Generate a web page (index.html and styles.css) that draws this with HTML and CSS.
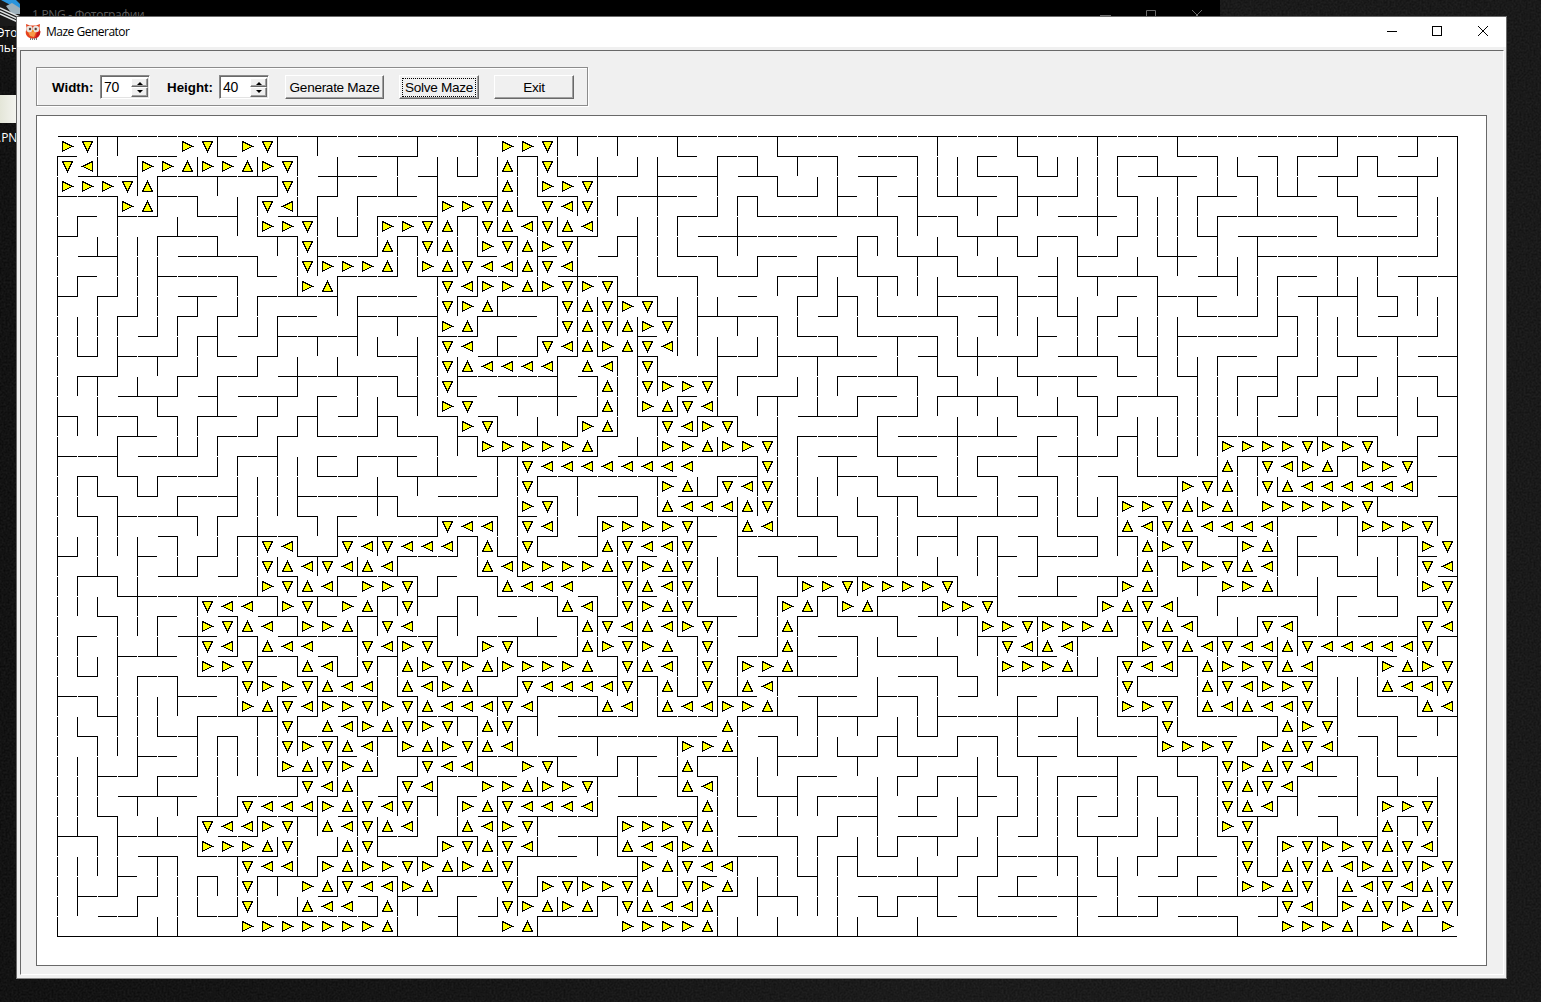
FILE: index.html
```html
<!DOCTYPE html>
<html lang="en">
<head>
<meta charset="utf-8">
<title>Maze Generator</title>
<link rel="stylesheet" href="styles.css">
</head>
<body>
<div class="desktop">
  <svg class="wallpaper" width="1541" height="1002">
    <filter id="leather" x="0" y="0" width="100%" height="100%" color-interpolation-filters="sRGB">
      <feTurbulence type="fractalNoise" baseFrequency="0.5" numOctaves="2" seed="4"/>
      <feColorMatrix values="0.16 0 0 0 0  0.16 0 0 0 0  0.16 0 0 0 0  0 0 0 0 0.6"/>
    </filter>
    <rect width="1541" height="1002" filter="url(#leather)"/>
  </svg>
  <div class="photos"><span class="photos-title">1.PNG - Фотографии</span>
    <svg class="photos-controls" width="110" height="16" viewBox="0 0 110 16"><path d="M0 15.5h11M46.500 16v-5.500h9V16M92 10l10 10M102 10L92 20"/></svg>
  </div>
  <div class="shortcut-art"><svg width="20" height="26" viewBox="0 0 20 26"><path fill="#2a94dc" d="M1 0h15l4 4v6z"/><path fill="#9db0bb" d="M6 6l6-3 8 5v6h-8z"/><path stroke="#dfe3e4" stroke-width="1.500" fill="none" d="M0 8l20 9M0 11l20 9M0 14l18 8"/></svg></div>
  <div class="shortcut-label">Это<br>льн</div>
  <div class="shortcut-thumb"></div>
  <div class="shortcut-label shortcut-file">.PNG</div>

  <div class="window">
    <div class="titlebar">
      <svg class="owl" width="16" height="16" viewBox="0 0 16 16">
        <path fill="#e5431f" d="M1 0l4 1.500h6L15 0l-.5 4 .8 4c0 4-3 6.500-7.300 6.500S.7 12 .7 8l.8-4z"/>
        <path fill="#f79a4a" d="M3 8h8l-2 5-4-1z"/>
        <path fill="#c5141c" d="M15.300 7c0 5-3 7.500-7 7.500 3-1 3-3 3.500-6z"/>
        <circle cx="4.500" cy="5" r="3.200" fill="#e9e4df"/><circle cx="11" cy="5" r="3.200" fill="#e9e4df"/>
        <circle cx="5" cy="5" r="1.200" fill="#54443c"/><circle cx="10.700" cy="5" r="1.200" fill="#54443c"/>
        <path fill="#f5a21d" d="M6.800 6h2l-1 3z"/>
        <path stroke="#777" d="M5.500 14v2M7.500 14v2M9.500 14v2M11.500 14v2"/>
      </svg>
      <span class="caption">Maze Generator</span>
      <svg class="controls" width="104" height="12" viewBox="0 0 104 12" shape-rendering="crispEdges">
        <path d="M1 5.500h10M46.500 .5h9v9h-9z"/><path shape-rendering="auto" d="M92 0l10 10M102 0L92 10"/>
      </svg>
    </div>
    <div class="client">
      <div class="toolbar">
        <label class="field-label">Width:</label>
        <div class="spin"><span class="value">70</span><span class="steps"><i class="step up"></i><i class="step down"></i></span></div>
        <label class="field-label second">Height:</label>
        <div class="spin"><span class="value">40</span><span class="steps"><i class="step up"></i><i class="step down"></i></span></div>
        <button class="btn generate">Generate Maze</button>
        <button class="btn solve"><span>Solve Maze</span></button>
        <button class="btn exit">Exit</button>
      </div>
      <div class="board">
        <svg class="maze" width="1402" height="802" viewBox="0 0 1402 802" shape-rendering="crispEdges">
          <path class="walls" id="walls"/>
          <path class="arrows" id="arrows"/>
        </svg>
      </div>
    </div>
  </div>
</div>
<script src="maze.js"></script>
</body>
</html>
```
FILE: styles.css
```css
body { margin: 0; overflow: hidden; font-family: "Liberation Sans", Arial, sans-serif; }
.desktop {
  position: relative; box-sizing: border-box; width: 1541px; height: 1002px; padding: 16px 0 0 16px;
  background: linear-gradient(90deg, #101010, #1a1a1a 30%, #262626 60%, #222);
}
.wallpaper { position: absolute; left: 0; top: 0; }
.photos { position: absolute; left: 20px; top: 0; width: 1200px; height: 16px; background: #000; }
.photos-title { position: absolute; left: 12px; top: 6px; font: 12px/18px "Open Sans", sans-serif; letter-spacing: -0.3px; color: #5c5c5c; white-space: nowrap; }
.photos-controls { position: absolute; left: 1080px; top: 0; fill: none; stroke: #6a6a6a; }
.shortcut-art { position: absolute; left: 0; top: 0; width: 20px; height: 26px; background: #1a1a1a; }
.shortcut-label { position: absolute; left: -3px; top: 25px; font: 12px/15px "Open Sans", sans-serif; color: #fff; }
.shortcut-file { top: 130px; left: -2px; }
.shortcut-thumb { position: absolute; left: 0; top: 95px; width: 17px; height: 28px; background: linear-gradient(90deg, #e4e6d8, #f4f4f0); }

.window { position: relative; box-sizing: border-box; width: 1491px; height: 963px; display: flex; flex-direction: column; background: #f0f0f0; border: 1px solid #6b6b6b; border-bottom-color: #8a8a8a; }
.titlebar { display: flex; align-items: center; height: 30px; padding: 0 16px 0 8px; background: #fff; }
.caption { margin-left: 5px; font: 12px/18px "Open Sans", sans-serif; letter-spacing: -0.5px; color: #000; }
.controls { margin-left: auto; fill: none; stroke: #000; }
.client { flex: 1; display: flex; flex-direction: column; margin: 3px 2px 3px 3px; padding: 16px 16px 8px 15px; border: 1px solid #696969; border-right-color: #fff; border-bottom-color: #fff; }

.toolbar { box-sizing: border-box; display: flex; align-items: center; width: 552px; height: 39px; padding: 0 0 0 15px; border: 1px solid #8c8c8c; box-shadow: inset 1px 1px #fff, 1px 1px #fff; }
.field-label { width: 48px; padding-top: 1px; font-weight: bold; font-size: 13.330px; color: #000; }
.field-label.second { width: 52px; margin-left: 17px; }
.spin { box-sizing: border-box; display: flex; width: 50px; height: 24px; background: #fff; border: 1px solid; border-color: #8a8a8a #fff #fff #8a8a8a; box-shadow: inset 1px 1px #696969, inset -1px -1px #e3e3e3; padding: 2px 1px 1px 2px; }
.value { flex: 1; font-size: 14px; line-height: 19px; letter-spacing: -0.3px; padding-left: 1px; }
.steps { display: flex; flex-direction: column; width: 17px; height: 19px; }
.step { position: relative; box-sizing: border-box; flex: 1; background: #f0f0f0; border: 1px solid; border-color: #fff #696969 #696969 #fff; box-shadow: inset -1px -1px #a0a0a0; }
.step::after { content: ""; position: absolute; left: 5px; top: 3px; border: 3px solid transparent; border-top: 0; border-bottom: 3px solid #000; }
.step.down::after { top: 2px; border-bottom: 0; border-top: 3px solid #000; }
.btn { box-sizing: border-box; height: 24px; padding: 2px 0 0; font: 13.600px/20px "Liberation Sans", Arial, sans-serif; letter-spacing: -0.3px; color: #000; background: #f0f0f0; border: 1px solid; border-color: #fff #696969 #696969 #fff; box-shadow: inset -1px -1px #a0a0a0; }
.generate { width: 99px; margin-left: 16px; }
.solve { width: 80px; margin-left: 15px; padding: 0; }
.solve span { display: block; margin: 2px 2px 1px; line-height: 17px; border: 1px dotted #000; }
.exit { width: 80px; margin-left: 15px; }

.board { flex: 1; margin-top: 9px; padding: 20px 0 0 20px; background: #fff; border: 1px solid #696969; }
.maze { display: block; }
.walls { fill: none; stroke: #000; stroke-width: 1; }
.arrows { fill: #ff0; stroke: #000; stroke-width: 1; stroke-linejoin: miter; }
```
FILE: maze.js
```js
// Cell walls, five column bands of 14 cells: "-" top, "|" left, "+" both, "." none.
const wallBands = [
`--++----+--+-+
+.|.+-.|-.|-|.
|---|+--+--||-
+--|.+-|.|+.|+
|+.+-.|--||--|
+.|||+--|.-+||
|--|||----|.|+
|+.||+---|-.|.
+.+.||-+.|+---
|||+.|+.+.|+-.
||||-.|+|-.+-+
|-.+-+.|-.+.|.
|++.|.+.+-.-+-
|.|--+.-|--+.+
+|+-|-|+-.+.+|
|..+-.||+-.+.-
+--|---.|+-||+
|+|-|+--.||||-
||-|-.+--|||+-
|-|+---|+.|.-|
|||||-|.|++-|.
+.|.+.|+.|||-+
|+-||--.-.|-|.
|||-+--+---|-+
|.-||+.|-|--|-
|+.|.|-+.+|---
|||+--.|-.+-|-
|-.|+-|--|+.-|
+-||||+-.|.+.+
||-|||.+--+|+.
|-|||--|+|||+-
|||.+-.|||||.|
||+-.+-.|..-+.
|||-+-+.|+--.+
||-|.|.+-.+-+|
+-|+---|--.||.
||||-+|--+-.|+
||.+.||+||++-.
|+-.+.||.||.|-
|.--.||--.----`,
`----+--+---++-
|--+.||||+||.|
+-.|-|-.|||--+
.+--.+--||--||
||+--|+||-||.|
-.|+||||-||-+.
--.||.|-.|+.|-
+--.-+.+-.|-+-
|+--.|+.+--|||
.+-+-|.+--.|||
-||.|+-.+.+.||
|.--|||---.+.-
-+-|||+----|-|
.||-||-.-+-+.|
-.+|.-|-|.|.+.
--.--|+|----.+
.+-+.|.-++---.
-.|-+--.||+-+-
--+|.---.|-||-
+..--+--|+.|.+
+-+--.+|||+.-|
.|.+--.|-|---.
+---|+.-|-----
-.+|+.+|---|-|
.+|..+|.-.|-|+
-|.+-|.+-+-.||
||+||-+.|---.-
-.||-|.+.+----
--|-|---+.+--|
-|.|+-+||+|---
|-+|.|.|.|.--+
+.|-+-.+---+..
|+.+.+---.|--+
.|-|+|+.+---.|
-||.|.|-|-+--.
||+-.+-|+.|--+
.|--+.|.|+--..
+--|.+--.|+-+-
.-|++.+.|+.|.+
--.|.-|-..+--.`,
`+--+----+-----
.||-.+-|-+-|--
-.+--|--|.||-+
+-+-.|+|--.+.|
.||+-.|-------
+|||--+----.+|
.||--|.+-.+-|.
||--|--.+-||-+
+-||||-..+.+||
||-|+-+-||-.|-
.+.|||.||--|--
|+|..+-.+-+--.
||+--|+-.||+--
||.+.|.++.|.+-
|-+.+-|.|---.+
.||-.|--|+---|
-------|||-+.-
--+.|+-||||+-|
-||--.|||||.|-
-.--+-|.|--|-|
+--|+.+---|-||
|+.||||-|--.-.
||-|||-|-+--+-
|+.||--|+.+|.+
.|-|-+.||+.---
-|.-||-.||--||
||-|||+-.+-.|-
|+|||||-+---.|
.||-.+-.|-+-.+
-.---.+--|+-+.
---+-.|-|.||.+
++.|+-||+-.-+.
.|-|-|||.+-..|
--.-|||-+|+--|
+---||-.|..+-|
|--|.|---|+.||
-+.+--+-|||+|-
-|||+.|||-||--
||-.|+.+-|||-|
.---.||.|..||-`,
`--+---+---+---
-|||+.-||||+-|
.|||--|-.|||--
-|--+.++-.|-||
|+-|.+..--+.||
|.|-+-|+-|.+.|
-+-|.|-.|+-.|-
|||---|-|-+--|
..+--|+-||.+.+
---|-|||-|+.||
+-|||..+.||-||
|-|-+-+.---|-|
-|-|.|-+-+.-.|
.|+-+-|.|-|+--
-..|.|---|+.||
---+--.+.|.+||
+-.|+--|-+-.|-
--||-|--||-|--
+|--.|-||||+--
|--+---.|-.|-|
|+-|+|-|--|+||
|.|.|+.+--..|+
---|.|-.+--+.|
--|--|---.+.+.
|--+|--+--.+||
-.|.++.|-+-.|-
---|.|--.||+-.
--|-|+----.|+-
-||-..+.+-||--
||+---+-.||--|
|-.+-||--|---|
-+-.||-+.--+.-
+.+-|-||+--|+|
.+.|+.|||+.||-
--.+.+.|||-.||
+-+.||-.|-+-.+
.|.+.+--+|||+.
--+.+.+..|-|.-
+-|-|----+.|-+
.|-.----.|---.`,
`+-------+---+-
--||-|+-.+|-.|
+.|-|||-+.--+.
|+-.|--.-|--||
||+-----|--.||
|-|-+--.----.|
+.||+---+-+--.
.--||+-.|||-+-
-+..||-+-|-|||
|---.+||||-..|
+----.|||--+-.
||+-.+.|-+.|--
-||+-|+.+.|+-|
||||+.|+|+.||-
|||.|-..|--|-|
||+----+--|.+.
..|++-|.+|--|-
+-||||--.--.+.
||.|.-----+-.-
|----+--+|---|
-|-+.|+..+-+|.
|--|-|+-|.||+.
-+.-.|.|--|.|-
|.+----|+.-|-|
-|.|+-|.|--.+.
|-+-.|+-----|+
+||--|.+--+.|.
.|+-|--||||--|
||.|--||||--|.
|----||-|--|-+
---.+.+.|-|+..
+-|+.+.+-||-+-
-|||+.+-.|-|.|
||||.+|--|+--|
|||-+..-|.|+||
.|-||+-+--||.|
+-.|||||-|.|+.
.+.|-.|||-+.||
-----+.|+.|+.|
---|-.--.+..+.`
];

// Solution arrows: first column, first row, then one character per cell.
const arrowBands = [
[0, 0, `>v....>v.>v...
v<..>>^>>^>v..
>>>v^......v..
...>^.....v<..
..........>>v.
............v.
............v>
............>^`],
[14, 0, `........>>v...
........^.v...
........^.>>v.
.....>>v^.v<v.
..>>v^.v^<v^<.
..^.v^.>v^>v..
>>^.>^v<<^v<..
.....v<>>^>v>v
.....v>^...v^v
.....>^....v^v
.....v<...v<^>
.....v^<<<<.^<
.....v.......^
.....>v......^
......>v....>^
.......>>>>>^.
.........v<<<<
.........v....
.........>v...
.....v<<.v<..>
v<v<<<.^.v...^
<^<....^<>>>>^
.>>v....^<<<..
>^.v.......^<.
^.v<........^v
.v<>v..>v...^>
.v.^>v>^>>>>^.
<<.^<>^..v<<<<
>v>v^<<<v<...^
<>^v>v.^v.....
^<.>^>v^<.....
>^..v<<..>v...
^..v<..>>^>>v.
^v<v..>^v<<<<.
<v^<..^<>v....
^v...>v^v<....
^>>v>^>^v.....
v<<>^...v.>v>>
<.^.....v>^>^.
>>^.....>^....`],
[28, 8, `>v............
^>v...........
^v<...........
.v............
.v>>v.........
.>^v<.........
..v<>v........
..>>^>>v......
<<<<...v......
..>^.v<v......
..^<<<^v......
>>>v..^<......
v<<v..........
v>^v..........
v^<v.....>>v>>
v>^v....>^.>^.
<^<>v...^.....
v>^.v...^.....
v^<.v.>>^.....
v.^.v.^<......
<.^<<>>^......
.....^........
...>>^........
...^..........
...^<.........
....^.........
>>>v^.........
^<<>^.........
.>^v<<........
v^.v>^........
v^<<^.........
>>>>^.........`],
[42, 18, `...........>>v
...........^<v
............^>
............^.
>>v........>^.
..>>v.....>^v<
....>>v>>>^.v^
.....v<^<...>v
.....>>>^..v<<
...........v..
...........>>v
.............v
.............>`],
[56, 15, `..>>>>v>>v....
..^.v<>^.>>v..
>v^.v^<<<<<<..
^>^.>>>>>v....
^<<<<....>>>v.
v..>^.......>v
>>v^<.......v<
..>>^.......>v
.............v
<...v<......v<
^<v<<^v<<<<<v.
.^>>v^<...>^>v
.^v<>>v...^<<v
.^<^<<v.....^<
.....^>v......
>>v.>^v<......
..v>^v<.......
..v^v<........
..v^<.....>>v.
..>v......^.v.
...v.>v>>v^v<.
...v.^v^<>^v>v
...>>^v.^<v<^v
.....v<.>^v>^v
.....>>>^.>^.>`],
[0, 20, `..........v<..
..........v^<v
..........>v^<
.......v<<.>v.
.......>v^<.>>
.......v<.^<<.
.......>>v..^<
.........v>>v^
.........>^v<>
...........v.^
...........v>v
...........>^v
............v<
.........v<<<>
.......v<<>v.^
.......>>>^v..
.........v<<.>
.........v..>^
.........v..^<
.........>>>>>`]
];

const COLS = 70, ROWS = 40, SIZE = 20;
const rows = wallBands.map(band => band.split("\n"));
const cellAt = (c, r) => rows[Math.floor(c / 14)][r][c % 14];
const hasTop = (c, r) => c >= 0 && c < COLS && (r === ROWS || "-+".includes(cellAt(c, r)));
const hasLeft = (c, r) => r >= 0 && r < ROWS && (c === COLS ? r < ROWS - 1 : "|+".includes(cellAt(c, r)));

let wallPath = `M0 ${ROWS * SIZE + .5}h${COLS * SIZE}M${COLS * SIZE + .5} 0v${(ROWS - 1) * SIZE}`;
for (let r = 0; r <= ROWS; r++) {
  for (let c = 0; c <= COLS; c++) {
    const x = c * SIZE, y = r * SIZE;
    const right = hasTop(c, r), down = hasLeft(c, r);
    if (right) wallPath += `M${x + 1} ${y + .5}h${SIZE - 1}`;
    if (down) wallPath += `M${x + .5} ${y + 1}v${SIZE - 1}`;
    if ((right || hasTop(c - 1, r)) && (down || hasLeft(c, r - 1))) wallPath += `M${x} ${y + .5}h1`;
  }
}
document.getElementById("walls").setAttribute("d", wallPath);

const shapes = {
  ">": "M5.5 5.5L15.5 10.5L5.5 15Z",
  "<": "M15.5 5.5L5.5 10.5L15.5 15Z",
  "v": "M5.5 5.5L15.5 5.5L10.5 15.5Z",
  "^": "M5.5 15.5L15.5 15.5L10.5 5.5Z"
};
const shift = (shape, dx, dy) =>
  shape.replace(/([ML])([\d.]+) ([\d.]+)/g, (m, k, x, y) => k + (+x + dx) + " " + (+y + dy));
let arrowPath = "";
for (const [column, start, band] of arrowBands) {
  band.split("\n").forEach((line, r) => [...line].forEach((ch, c) => {
    if (shapes[ch]) arrowPath += shift(shapes[ch], (column + c) * SIZE, (start + r) * SIZE);
  }));
}
document.getElementById("arrows").setAttribute("d", arrowPath);
```
